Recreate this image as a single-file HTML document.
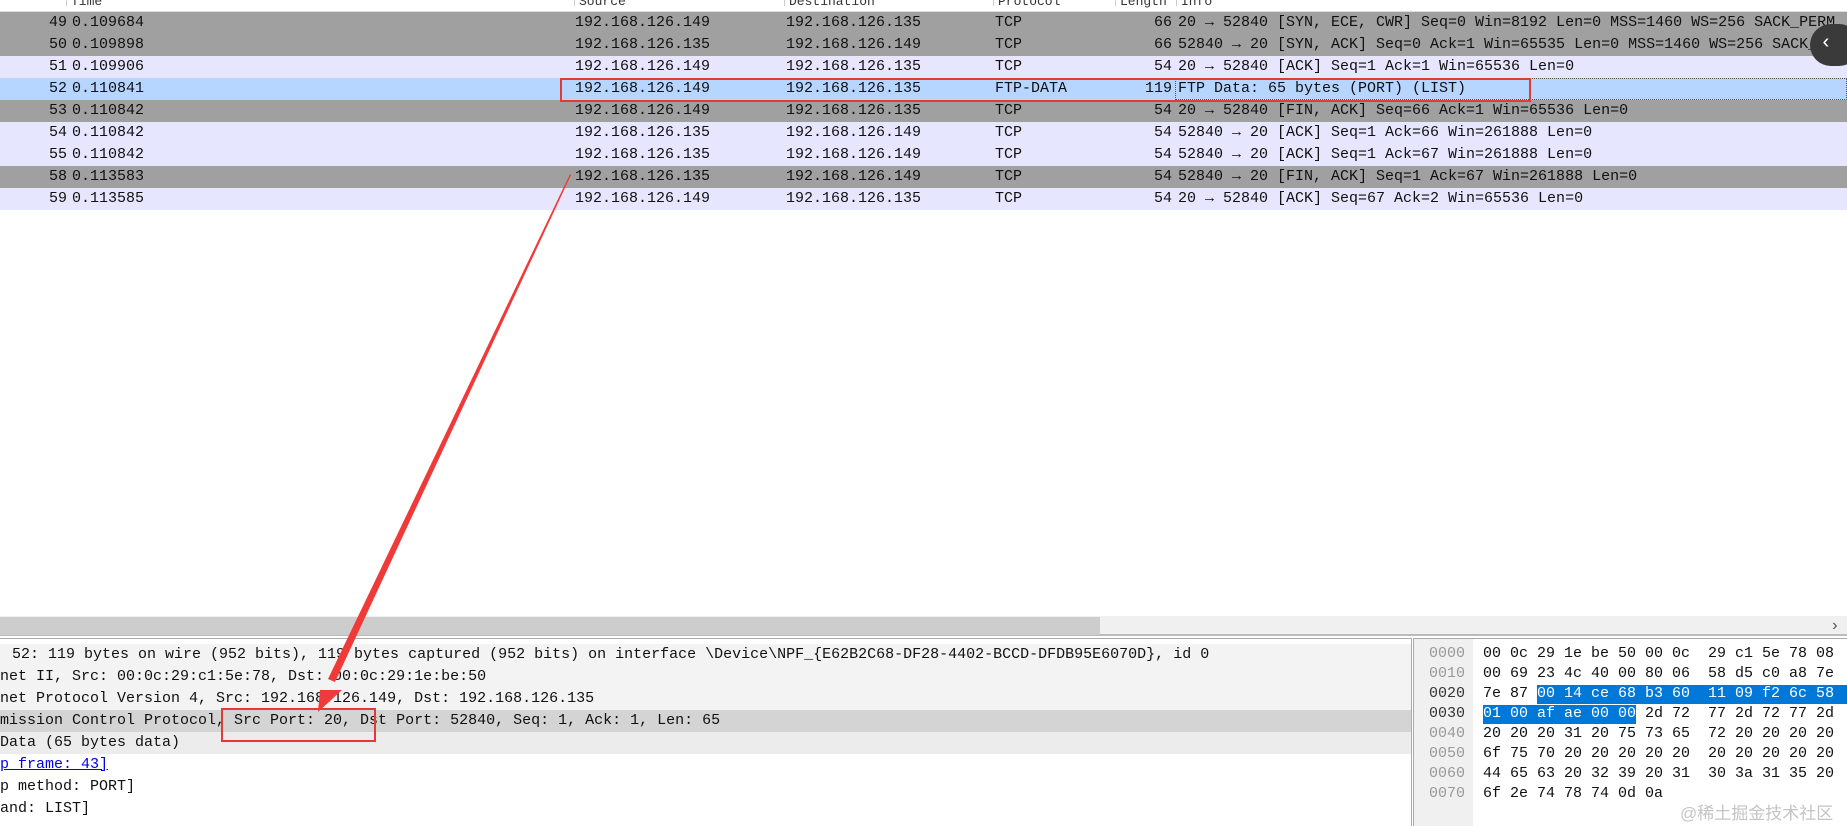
<!DOCTYPE html>
<html><head><meta charset="utf-8"><style>
*{margin:0;padding:0;box-sizing:border-box}
body{width:1847px;height:826px;overflow:hidden;background:#fff;position:relative;font-family:"Liberation Mono",monospace;font-size:15px;color:#111}
.hdr{position:absolute;top:0;left:0;width:1847px;height:12px;background:#fff;border-bottom:1px solid #ddd}
.hdr span{position:absolute;top:-6px;font-size:13px;color:#333;border-left:1px solid #ccc;padding-left:4px;height:12px}
.row{position:absolute;left:0;width:1847px;height:22px;line-height:22px;white-space:pre}
.row span{position:absolute;top:0}
.d{background:#a0a0a0}.l{background:#e7e6ff}.s{background:#b6d5ff}
.no{width:67px;text-align:right;left:0}
.dl{position:absolute;left:0;width:1412px;height:22px;line-height:22px;white-space:pre;padding-left:12px}
.hx{position:absolute;height:20px;line-height:20px;white-space:pre}
</style></head><body>
<div class="hdr"><span style="left:66px">Time</span><span style="left:574px">Source</span><span style="left:784px">Destination</span><span style="left:993px">Protocol</span><span style="left:1115px">Length</span><span style="left:1176px">Info</span></div>

<div class="row d" style="top:12px"><span class="no">49</span><span style="left:72px">0.109684</span><span style="left:575px">192.168.126.149</span><span style="left:786px">192.168.126.135</span><span style="left:995px">TCP</span><span style="left:1140px;width:32px;text-align:right">66</span><span style="left:1178px">20 → 52840 [SYN, ECE, CWR] Seq=0 Win=8192 Len=0 MSS=1460 WS=256 SACK_PERM</span></div>
<div class="row d" style="top:34px"><span class="no">50</span><span style="left:72px">0.109898</span><span style="left:575px">192.168.126.135</span><span style="left:786px">192.168.126.149</span><span style="left:995px">TCP</span><span style="left:1140px;width:32px;text-align:right">66</span><span style="left:1178px">52840 → 20 [SYN, ACK] Seq=0 Ack=1 Win=65535 Len=0 MSS=1460 WS=256 SACK_PERM</span></div>
<div class="row l" style="top:56px"><span class="no">51</span><span style="left:72px">0.109906</span><span style="left:575px">192.168.126.149</span><span style="left:786px">192.168.126.135</span><span style="left:995px">TCP</span><span style="left:1140px;width:32px;text-align:right">54</span><span style="left:1178px">20 → 52840 [ACK] Seq=1 Ack=1 Win=65536 Len=0</span></div>
<div class="row s" style="top:78px"><span class="no">52</span><span style="left:72px">0.110841</span><span style="left:575px">192.168.126.149</span><span style="left:786px">192.168.126.135</span><span style="left:995px">FTP-DATA</span><span style="left:1140px;width:32px;text-align:right">119</span><span style="left:1175px;width:672px;height:22px;border:1px dotted #555;padding-left:2px;line-height:20px">FTP Data: 65 bytes (PORT) (LIST)</span></div>
<div class="row d" style="top:100px"><span class="no">53</span><span style="left:72px">0.110842</span><span style="left:575px">192.168.126.149</span><span style="left:786px">192.168.126.135</span><span style="left:995px">TCP</span><span style="left:1140px;width:32px;text-align:right">54</span><span style="left:1178px">20 → 52840 [FIN, ACK] Seq=66 Ack=1 Win=65536 Len=0</span></div>
<div class="row l" style="top:122px"><span class="no">54</span><span style="left:72px">0.110842</span><span style="left:575px">192.168.126.135</span><span style="left:786px">192.168.126.149</span><span style="left:995px">TCP</span><span style="left:1140px;width:32px;text-align:right">54</span><span style="left:1178px">52840 → 20 [ACK] Seq=1 Ack=66 Win=261888 Len=0</span></div>
<div class="row l" style="top:144px"><span class="no">55</span><span style="left:72px">0.110842</span><span style="left:575px">192.168.126.135</span><span style="left:786px">192.168.126.149</span><span style="left:995px">TCP</span><span style="left:1140px;width:32px;text-align:right">54</span><span style="left:1178px">52840 → 20 [ACK] Seq=1 Ack=67 Win=261888 Len=0</span></div>
<div class="row d" style="top:166px"><span class="no">58</span><span style="left:72px">0.113583</span><span style="left:575px">192.168.126.135</span><span style="left:786px">192.168.126.149</span><span style="left:995px">TCP</span><span style="left:1140px;width:32px;text-align:right">54</span><span style="left:1178px">52840 → 20 [FIN, ACK] Seq=1 Ack=67 Win=261888 Len=0</span></div>
<div class="row l" style="top:188px"><span class="no">59</span><span style="left:72px">0.113585</span><span style="left:575px">192.168.126.149</span><span style="left:786px">192.168.126.135</span><span style="left:995px">TCP</span><span style="left:1140px;width:32px;text-align:right">54</span><span style="left:1178px">20 → 52840 [ACK] Seq=67 Ack=2 Win=65536 Len=0</span></div>

<div style="position:absolute;left:1810px;top:24px;width:50px;height:42px;border-radius:21px;background:#3a3a3a;color:#fff;font-size:20px;line-height:40px;padding-left:10px">‹</div>

<div style="position:absolute;left:0;top:616px;width:1847px;height:20px;background:#f0f0f0;border-bottom:2px solid #bbb"></div>
<div style="position:absolute;left:0;top:617px;width:1100px;height:18px;background:#cdcdcd"></div>
<div style="position:absolute;left:1830px;top:616px;font-size:16px;color:#555;line-height:20px">›</div>

<div style="position:absolute;left:0;top:638px;width:1412px;height:188px;background:#fff;border-top:1px solid #aaa;border-right:1px solid #aaa"></div>
<div style="position:absolute;left:0;top:644px;width:1411px;height:66px;background:#f3f3f3"></div>
<div class="dl" style="top:644px">52: 119 bytes on wire (952 bits), 119 bytes captured (952 bits) on interface \Device\NPF_{E62B2C68-DF28-4402-BCCD-DFDB95E6070D}, id 0</div>
<div class="dl" style="top:666px;padding-left:0">net II, Src: 00:0c:29:c1:5e:78, Dst: 00:0c:29:1e:be:50</div>
<div class="dl" style="top:688px;padding-left:0">net Protocol Version 4, Src: 192.168.126.149, Dst: 192.168.126.135</div>
<div class="dl" style="top:710px;padding-left:0;background:#d4d4d4;width:1411px">mission Control Protocol, Src Port: 20, Dst Port: 52840, Seq: 1, Ack: 1, Len: 65</div>
<div class="dl" style="top:732px;padding-left:0;background:#ececec;width:1411px">Data (65 bytes data)</div>
<div class="dl" style="top:754px;padding-left:0;color:#0000ee;text-decoration:underline">p frame: 43]</div>
<div class="dl" style="top:776px;padding-left:0">p method: PORT]</div>
<div class="dl" style="top:798px;padding-left:0">and: LIST]</div>

<div style="position:absolute;left:1413px;top:638px;width:434px;height:188px;border-left:1px solid #aaa;border-top:1px solid #aaa;background:#fff"></div>
<div style="position:absolute;left:1414px;top:639px;width:59px;height:187px;background:#f0f0f0"></div>
<div style="position:absolute;left:1537px;top:685px;width:310px;height:19px;background:#0078d7"></div>
<div style="position:absolute;left:1483px;top:705px;width:153px;height:19px;background:#0078d7"></div>
<div class="hx" style="left:1429px;top:644px;color:#999">0000</div><div class="hx" style="left:1483px;top:644px">00 0c 29 1e be 50 00 0c  29 c1 5e 78 08</div>
<div class="hx" style="left:1429px;top:664px;color:#999">0010</div><div class="hx" style="left:1483px;top:664px">00 69 23 4c 40 00 80 06  58 d5 c0 a8 7e</div>
<div class="hx" style="left:1429px;top:684px;color:#333">0020</div><div class="hx" style="left:1483px;top:684px">7e 87 <span style="color:#fff">00 14 ce 68 b3 60  11 09 f2 6c 58</span></div>
<div class="hx" style="left:1429px;top:704px;color:#333">0030</div><div class="hx" style="left:1483px;top:704px"><span style="color:#fff">01 00 af ae 00 00</span> 2d 72  77 2d 72 77 2d</div>
<div class="hx" style="left:1429px;top:724px;color:#999">0040</div><div class="hx" style="left:1483px;top:724px">20 20 20 31 20 75 73 65  72 20 20 20 20</div>
<div class="hx" style="left:1429px;top:744px;color:#999">0050</div><div class="hx" style="left:1483px;top:744px">6f 75 70 20 20 20 20 20  20 20 20 20 20</div>
<div class="hx" style="left:1429px;top:764px;color:#999">0060</div><div class="hx" style="left:1483px;top:764px">44 65 63 20 32 39 20 31  30 3a 31 35 20</div>
<div class="hx" style="left:1429px;top:784px;color:#999">0070</div><div class="hx" style="left:1483px;top:784px">6f 2e 74 78 74 0d 0a</div>
<div style="position:absolute;left:1680px;top:799px;font-family:'Liberation Sans','Noto Sans CJK SC',sans-serif;font-size:17px;color:#c4c4c4">@稀土掘金技术社区</div>

<div style="position:absolute;left:560px;top:78px;width:971px;height:24px;border:2px solid #e53935"></div>
<div style="position:absolute;left:221px;top:708px;width:155px;height:34px;border:2px solid #e53935"></div>
<svg style="position:absolute;left:0;top:0" width="1847" height="826">
<polygon points="570,174 571,175 335,682 328,679" fill="#f03a3a"/>
<polygon points="320,690 342,690 318,712" fill="#f03a3a"/>
</svg>
</body></html>
